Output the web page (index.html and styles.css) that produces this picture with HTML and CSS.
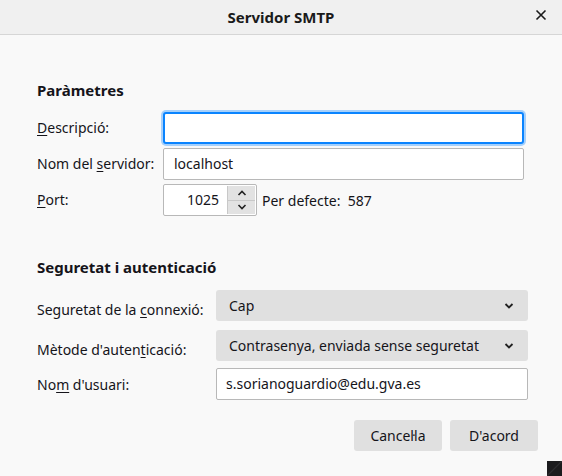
FILE: index.html
```html
<!DOCTYPE html>
<html lang="ca">
<head>
<meta charset="utf-8">
<link rel="stylesheet" href="styles.css">
</head>
<body>
<div class="dialog">
  <header class="titlebar">
    <span class="title">Servidor SMTP</span>
    <span class="close">
      <svg width="12" height="12" viewBox="0 0 12 12"><path d="M1.5 1.5 L10.5 10.5 M10.5 1.5 L1.5 10.5" stroke="#1a1a1a" stroke-width="1.6" fill="none"/></svg>
    </span>
  </header>
  <main class="content">
    <section class="section params">
      <h2 class="heading">Paràmetres</h2>
      <div class="grid grid-a">
        <label class="lbl"><u>D</u>escripció:</label>
        <div class="field focused"></div>
        <label class="lbl">Nom del <u>s</u>ervidor:</label>
        <div class="field">localhost</div>
        <label class="lbl"><u>P</u>ort:</label>
        <div class="port-row">
          <div class="spin">
            <span class="spin-val">1025</span>
            <span class="spin-btns">
              <span class="spin-btn"><svg width="10" height="6" viewBox="0 0 10 6"><path d="M1.5 5 L5 1.5 L8.5 5" stroke="#222" stroke-width="1.6" fill="none"/></svg></span>
              <span class="spin-btn"><svg width="10" height="6" viewBox="0 0 10 6"><path d="M1.5 1 L5 4.5 L8.5 1" stroke="#222" stroke-width="1.6" fill="none"/></svg></span>
            </span>
          </div>
          <span class="default">Per defecte:&nbsp; 587</span>
        </div>
      </div>
    </section>
    <section class="section security">
      <h2 class="heading">Seguretat i autenticació</h2>
      <div class="grid grid-b">
        <label class="lbl">Seguretat de la <u>c</u>onnexió:</label>
        <div class="select"><span>Cap</span><svg width="10" height="6" viewBox="0 0 10 6"><path d="M1.5 1 L5 4.5 L8.5 1" stroke="#222" stroke-width="1.8" fill="none"/></svg></div>
        <label class="lbl">Mètode d'auten<u>t</u>icació:</label>
        <div class="select"><span>Contrasenya, enviada sense seguretat</span><svg width="10" height="6" viewBox="0 0 10 6"><path d="M1.5 1 L5 4.5 L8.5 1" stroke="#222" stroke-width="1.8" fill="none"/></svg></div>
        <label class="lbl">No<u>m</u> d'usuari:</label>
        <div class="field user">s.sorianoguardio@edu.gva.es</div>
      </div>
    </section>
    <div class="buttons">
      <button class="btn">Cancel·la</button>
      <button class="btn">D'acord</button>
    </div>
  </main>
  <div class="corner"></div>
</div>
</body>
</html>
```

FILE: styles.css
```css
html, body {
  margin: 0;
  padding: 0;
  width: 562px;
  height: 476px;
  overflow: hidden;
  background: #f9f9f9;
  font-family: "Noto Sans", "Open Sans", sans-serif;
  font-size: 14px;
  color: #15141a;
}
.dialog {
  position: relative;
  width: 562px;
  height: 476px;
}
.titlebar {
  height: 34px;
  border-bottom: 1px solid #d6d6d6;
  background: #f0f0f0;
  display: flex;
  align-items: center;
  justify-content: center;
  position: relative;
}
.title {
  font-weight: bold;
  font-size: 15px;
  color: #1a1a1a;
}
.close {
  position: absolute;
  right: 15px;
  top: 9px;
  width: 12px;
  height: 12px;
  display: flex;
}
.content {
  padding: 0 0 0 37px;
}
.heading {
  margin: 0;
  font-size: 15px;
  font-weight: bold;
  line-height: 20px;
  color: #15141a;
}
.params .heading {
  margin-top: 45px;
  margin-bottom: 12px;
}
.grid {
  display: grid;
  align-items: center;
}
.grid-a {
  grid-template-columns: 126px 361px;
  row-gap: 4px;
}
.grid-b {
  grid-template-columns: 179px 312px;
}
.lbl {
  line-height: 20px;
  white-space: nowrap;
}
.lbl u {
  text-decoration-thickness: 1px;
  text-underline-offset: 2px;
}
.field {
  height: 32px;
  box-sizing: border-box;
  border: 1px solid #b8b8b8;
  border-radius: 2px;
  background: #fff;
  padding: 0 10px;
  line-height: 30px;
}
.field.focused {
  border: 2px solid #0a84ff;
  border-radius: 3px;
  box-shadow: 0 0 0 2px #a6d0fb;
}
.port-row {
  display: flex;
  align-items: center;
  gap: 5px;
}
.spin {
  width: 94px;
  height: 32px;
  box-sizing: border-box;
  border: 1px solid #b8b8b8;
  border-radius: 2px;
  background: #fff;
  display: flex;
}
.spin-val {
  flex: 1;
  text-align: right;
  line-height: 30px;
  padding-right: 8px;
}
.spin-btns {
  width: 27px;
  margin: 1px 1px 1px 0;
  display: flex;
  flex-direction: column;
  border-left: 1px solid #c8c8c8;
}
.spin-btn {
  flex: 1;
  background: #e2e2e2;
  display: flex;
  align-items: center;
  justify-content: center;
}
.spin-btn + .spin-btn {
  border-top: 1px solid #c8c8c8;
}
.security .heading {
  margin-top: 41px;
  margin-bottom: 13px;
}
.select {
  height: 31px;
  box-sizing: border-box;
  background: #e0e0e0;
  border-radius: 3px;
  display: flex;
  align-items: center;
  justify-content: space-between;
  padding: 0 14px 0 13px;
  margin-bottom: 9px;
}
.field.user {
  height: 32px;
  padding: 0 9px;
  margin-top: -2px;
}
.buttons {
  display: flex;
  justify-content: flex-end;
  gap: 8px;
  padding-right: 24px;
  margin-top: 20px;
}
.btn {
  width: 88px;
  height: 31px;
  border: none;
  border-radius: 3px;
  background: #e0e0e0;
  font-family: "Noto Sans", "Open Sans", sans-serif;
  font-size: 14px;
  color: #15141a;
  padding: 0;
}
.corner {
  position: absolute;
  right: 0;
  bottom: 0;
  width: 15px;
  height: 15px;
  background: linear-gradient(135deg, #1c1c1e 0%, #1c1c1e 45%, #2d2d30 50%, #1c1c1e 55%);
}
```
